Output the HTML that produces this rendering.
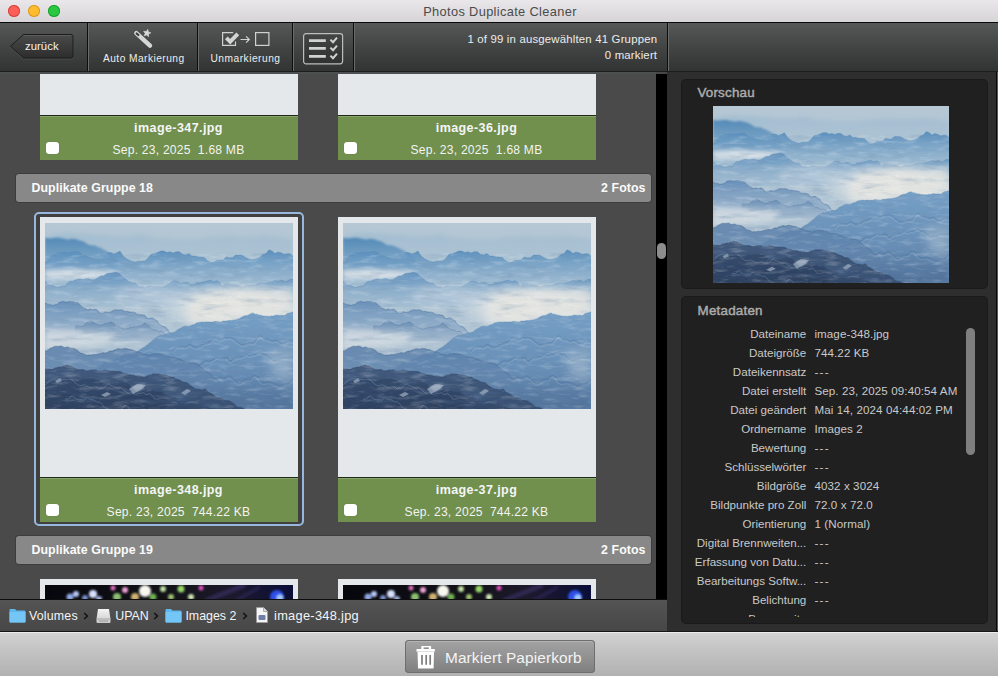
<!DOCTYPE html>
<html><head><meta charset="utf-8">
<style>
*{margin:0;padding:0;box-sizing:border-box}
html,body{width:998px;height:676px;overflow:hidden;background:#474747;font-family:"Liberation Sans",sans-serif}
.abs{position:absolute}
svg.img{position:absolute;display:block}
</style></head><body>
<svg width="0" height="0" style="position:absolute"><defs>
<radialGradient id="g_fog" cx="0.5" cy="0.5" r="0.5">
  <stop offset="0" stop-color="#e6e6e2"/>
  <stop offset="0.5" stop-color="#e3e6e5" stop-opacity="0.9"/>
  <stop offset="1" stop-color="#d5dfe6" stop-opacity="0"/>
</radialGradient>
<filter id="f05" x="-10%" y="-10%" width="120%" height="120%"><feGaussianBlur stdDeviation="0.5"/></filter>
<filter id="f1" x="-20%" y="-20%" width="140%" height="140%"><feGaussianBlur stdDeviation="1"/></filter>
<filter id="f2" x="-30%" y="-30%" width="160%" height="160%"><feGaussianBlur stdDeviation="2.5"/></filter>
<filter id="f4" x="-40%" y="-40%" width="180%" height="180%"><feGaussianBlur stdDeviation="5"/></filter>
<filter id="tex" x="0" y="0" width="100%" height="100%">
  <feTurbulence type="fractalNoise" baseFrequency="0.06 0.22" numOctaves="4" seed="11" result="n"/>
  <feColorMatrix in="n" type="matrix" values="0 0 0 0 1  0 0 0 0 1  0 0 0 0 1  2.6 0 0 0 -1.3" result="w"/>
  <feComposite in="w" in2="SourceGraphic" operator="in"/>
</filter>
<filter id="texd" x="0" y="0" width="100%" height="100%">
  <feTurbulence type="fractalNoise" baseFrequency="0.04 0.16" numOctaves="4" seed="5" result="n"/>
  <feColorMatrix in="n" type="matrix" values="0 0 0 0 0.15  0 0 0 0 0.26  0 0 0 0 0.42  -2.6 0 0 0 1.25" result="d"/>
  <feComposite in="d" in2="SourceGraphic" operator="in"/>
</filter>
<linearGradient id="mg1" x1="0" y1="0" x2="0" y2="1"><stop offset="0" stop-color="#b7c8d4" stop-opacity="1"/><stop offset="0.25" stop-color="#a9c1d3" stop-opacity="1"/><stop offset="0.6" stop-color="#b3c6d4" stop-opacity="1"/><stop offset="1" stop-color="#9db4c9" stop-opacity="1"/></linearGradient><linearGradient id="mg2" x1="0" y1="0" x2="0" y2="1"><stop offset="0" stop-color="#93b4ce" stop-opacity="0.6"/><stop offset="1" stop-color="#a9c1d3" stop-opacity="0.1"/></linearGradient><linearGradient id="mg3" x1="0" y1="0" x2="0" y2="1"><stop offset="0" stop-color="#4f87b6" stop-opacity="0.95"/><stop offset="1" stop-color="#6f9dc4" stop-opacity="0.6"/></linearGradient><linearGradient id="mg4" x1="0" y1="0" x2="0" y2="1"><stop offset="0" stop-color="#5a8fbd" stop-opacity="1"/><stop offset="1" stop-color="#8fb1cd" stop-opacity="0.5"/></linearGradient><linearGradient id="mg5" x1="0" y1="0" x2="0" y2="1"><stop offset="0" stop-color="#5f90bd" stop-opacity="0.9"/><stop offset="1" stop-color="#8fb0cc" stop-opacity="0.35"/></linearGradient><linearGradient id="mg6" x1="0" y1="0" x2="0" y2="1"><stop offset="0" stop-color="#668eb8" stop-opacity="0.95"/><stop offset="1" stop-color="#93aecb" stop-opacity="0.5"/></linearGradient><linearGradient id="mg7" x1="0" y1="0" x2="0" y2="1"><stop offset="0" stop-color="#5f86b0" stop-opacity="0.8"/><stop offset="1" stop-color="#b9c8d5" stop-opacity="0.2"/></linearGradient><linearGradient id="mg8" x1="0" y1="0" x2="0" y2="1"><stop offset="0" stop-color="#76a0c6" stop-opacity="1"/><stop offset="1" stop-color="#5e82ab" stop-opacity="1"/></linearGradient><linearGradient id="mg9" x1="0" y1="0" x2="0" y2="1"><stop offset="0" stop-color="#5b80aa" stop-opacity="0.85"/><stop offset="1" stop-color="#6a8cb3" stop-opacity="0.8"/></linearGradient><linearGradient id="mg10" x1="0" y1="0" x2="0" y2="1"><stop offset="0" stop-color="#425b7e" stop-opacity="1"/><stop offset="1" stop-color="#364c6d" stop-opacity="1"/></linearGradient><linearGradient id="mg11" x1="0" y1="0" x2="0" y2="1"><stop offset="0" stop-color="#33486a" stop-opacity="0.8"/><stop offset="1" stop-color="#2c3f5e" stop-opacity="0.9"/></linearGradient><linearGradient id="mg12" x1="0" y1="0" x2="0" y2="1"><stop offset="0" stop-color="#3f5a80" stop-opacity="0"/><stop offset="1" stop-color="#3f5a80" stop-opacity="0.45"/></linearGradient><symbol id="mtn" viewBox="0 0 248 186" preserveAspectRatio="none">
<rect width="248" height="186" fill="url(#mg1)"/>
<path d="M0.0 14.0 L3.8 13.0 L7.5 11.9 L11.2 11.1 L15.0 11.0 L18.8 10.6 L22.5 10.3 L26.2 10.3 L30.0 11.1 L33.8 11.3 L37.5 10.6 L41.2 11.2 L45.0 11.2 L48.8 11.8 L52.5 12.4 L56.2 12.0 L60.0 12.0 L64.4 13.1 L68.8 13.4 L73.1 13.4 L77.5 13.3 L81.9 13.5 L86.2 12.9 L90.6 12.4 L95.0 11.2 L99.4 12.5 L103.8 13.9 L108.1 14.5 L112.5 15.4 L116.9 15.5 L121.2 15.5 L125.6 16.2 L130.0 17.0 L134.4 16.4 L138.8 16.6 L143.1 16.5 L147.5 16.9 L151.9 16.8 L156.2 16.0 L160.6 14.9 L165.0 14.6 L169.4 14.0 L173.8 14.4 L178.1 13.9 L182.5 13.1 L186.9 13.5 L191.2 14.3 L195.6 14.2 L200.0 14.0 L203.0 14.2 L206.0 14.5 L209.0 14.1 L212.0 13.9 L215.0 13.8 L218.0 13.1 L221.0 13.1 L224.0 13.5 L227.0 13.8 L230.0 14.2 L233.0 14.2 L236.0 14.6 L239.0 15.4 L242.0 16.1 L245.0 16.4 L248.0 17.0 L248.0 38 L0.0 38 Z" fill="url(#mg2)" filter="url(#f2)"/>
<path d="M0.0 15.0 L1.9 15.0 L3.8 15.2 L5.6 15.4 L7.5 15.0 L9.4 15.0 L11.2 14.6 L13.1 14.7 L15.0 14.8 L16.9 15.4 L18.8 15.4 L20.6 16.0 L22.5 16.4 L24.4 16.3 L26.2 15.8 L28.1 15.8 L30.0 16.0 L31.6 16.3 L33.2 16.9 L34.9 17.4 L36.5 17.9 L38.1 18.3 L39.8 19.2 L41.4 20.3 L43.0 21.6 L44.6 22.1 L46.2 22.2 L47.9 22.2 L49.5 22.4 L51.1 22.9 L52.8 24.1 L54.4 24.3 L56.0 25.0 L57.0 25.6 L58.0 26.4 L59.0 26.8 L60.0 27.1 L61.0 27.8 L62.0 28.7 L63.0 29.2 L64.0 29.9 L65.0 30.8 L66.0 32.1 L67.0 32.9 L68.0 33.4 L69.0 33.8 L70.0 34.3 L71.0 35.0 L72.0 36.0 L72.0 46 L0.0 46 Z" fill="url(#mg3)" filter="url(#f1)"/>
<path d="M0.0 40.0 L3.1 38.0 L6.2 33.1 L9.4 31.8 L12.5 29.6 L15.6 30.0 L18.8 28.9 L21.9 29.7 L25.0 29.2 L28.1 28.8 L31.2 28.4 L34.4 29.2 L37.5 32.5 L40.6 32.4 L43.8 33.8 L46.9 35.9 L50.0 36.0 L53.1 34.9 L56.2 31.3 L59.4 31.5 L62.5 29.4 L65.6 29.6 L68.8 30.7 L71.9 29.8 L75.0 28.1 L78.1 32.9 L81.2 35.4 L84.4 37.3 L87.5 38.4 L90.6 39.1 L93.8 38.2 L96.9 38.2 L100.0 38.0 L103.1 35.0 L106.2 30.9 L109.4 30.6 L112.5 29.4 L115.6 28.0 L118.8 27.9 L121.9 29.4 L125.0 28.8 L128.1 29.9 L131.2 28.7 L134.4 28.8 L137.5 31.2 L140.6 32.1 L143.8 30.6 L146.9 33.1 L150.0 33.0 L153.1 33.9 L156.2 34.0 L159.4 34.5 L162.5 37.8 L165.6 39.6 L168.8 39.3 L171.9 37.2 L175.0 37.0 L178.1 36.8 L181.2 34.0 L184.4 34.7 L187.5 34.6 L190.6 32.1 L193.8 32.1 L196.9 32.2 L200.0 34.0 L203.0 35.7 L206.0 36.7 L209.0 36.2 L212.0 35.3 L215.0 34.0 L218.0 31.4 L221.0 30.4 L224.0 26.8 L227.0 27.9 L230.0 30.6 L233.0 28.9 L236.0 29.7 L239.0 31.3 L242.0 30.8 L245.0 30.7 L248.0 33.0 L248.0 62 L0.0 62 Z" fill="url(#mg4)" filter="url(#f05)"/>
<path d="M0.0 40.0 L3.1 38.0 L6.2 33.1 L9.4 31.8 L12.5 29.6 L15.6 30.0 L18.8 28.9 L21.9 29.7 L25.0 29.2 L28.1 28.8 L31.2 28.4 L34.4 29.2 L37.5 32.5 L40.6 32.4 L43.8 33.8 L46.9 35.9 L50.0 36.0 L53.1 34.9 L56.2 31.3 L59.4 31.5 L62.5 29.4 L65.6 29.6 L68.8 30.7 L71.9 29.8 L75.0 28.1 L78.1 32.9 L81.2 35.4 L84.4 37.3 L87.5 38.4 L90.6 39.1 L93.8 38.2 L96.9 38.2 L100.0 38.0 L103.1 35.0 L106.2 30.9 L109.4 30.6 L112.5 29.4 L115.6 28.0 L118.8 27.9 L121.9 29.4 L125.0 28.8 L128.1 29.9 L131.2 28.7 L134.4 28.8 L137.5 31.2 L140.6 32.1 L143.8 30.6 L146.9 33.1 L150.0 33.0 L153.1 33.9 L156.2 34.0 L159.4 34.5 L162.5 37.8 L165.6 39.6 L168.8 39.3 L171.9 37.2 L175.0 37.0 L178.1 36.8 L181.2 34.0 L184.4 34.7 L187.5 34.6 L190.6 32.1 L193.8 32.1 L196.9 32.2 L200.0 34.0 L203.0 35.7 L206.0 36.7 L209.0 36.2 L212.0 35.3 L215.0 34.0 L218.0 31.4 L221.0 30.4 L224.0 26.8 L227.0 27.9 L230.0 30.6 L233.0 28.9 L236.0 29.7 L239.0 31.3 L242.0 30.8 L245.0 30.7 L248.0 33.0" fill="none" stroke="#4f80ad" stroke-width="1" opacity="0.3" filter="url(#f05)"/>
<path d="M0 47 L32 46 L74 49 L62 55 L25 57 L0 56 Z" fill="#dde3e8" opacity="0.85" filter="url(#f2)"/>
<path d="M0.0 58.0 L2.5 61.0 L5.0 62.5 L7.5 62.2 L10.0 63.6 L12.5 64.5 L15.0 63.8 L17.5 62.8 L20.0 63.0 L22.5 60.1 L25.0 58.3 L27.5 58.3 L30.0 57.0 L32.5 56.3 L35.0 55.9 L37.5 56.6 L40.0 56.0 L43.1 55.6 L46.2 56.8 L49.4 56.8 L52.5 54.9 L55.6 53.0 L58.8 52.7 L61.9 50.6 L65.0 50.3 L68.1 49.8 L71.2 49.3 L74.4 50.8 L77.5 53.3 L80.6 56.1 L83.8 58.6 L86.9 60.3 L90.0 60.0 L92.5 62.6 L95.0 64.1 L97.5 63.6 L100.0 65.2 L102.5 63.6 L105.0 62.9 L107.5 63.5 L110.0 64.0 L112.5 63.8 L115.0 63.8 L117.5 64.0 L120.0 63.3 L122.5 61.6 L125.0 60.1 L127.5 58.1 L130.0 58.0 L132.2 58.4 L134.4 59.8 L136.6 60.3 L138.8 59.5 L140.9 59.4 L143.1 59.8 L145.3 61.1 L147.5 61.5 L149.7 61.4 L151.9 59.5 L154.1 59.7 L156.2 59.4 L158.4 59.1 L160.6 58.2 L162.8 57.8 L165.0 57.0 L166.6 57.5 L168.1 58.4 L169.7 58.5 L171.2 57.5 L172.8 58.2 L174.4 59.1 L175.9 62.1 L177.5 63.4 L179.1 61.7 L180.6 60.8 L182.2 61.0 L183.8 60.3 L185.3 61.3 L186.9 61.5 L188.4 61.9 L190.0 62.0 L193.6 63.0 L197.2 64.3 L200.9 62.2 L204.5 62.2 L208.1 62.5 L211.8 61.3 L215.4 60.3 L219.0 60.2 L222.6 59.9 L226.2 58.7 L229.9 57.3 L233.5 58.0 L237.1 57.3 L240.8 59.1 L244.4 56.4 L248.0 56.0 L248.0 84 L0.0 84 Z" fill="url(#mg5)" filter="url(#f05)"/>
<path d="M0.0 58.0 L2.5 61.0 L5.0 62.5 L7.5 62.2 L10.0 63.6 L12.5 64.5 L15.0 63.8 L17.5 62.8 L20.0 63.0 L22.5 60.1 L25.0 58.3 L27.5 58.3 L30.0 57.0 L32.5 56.3 L35.0 55.9 L37.5 56.6 L40.0 56.0 L43.1 55.6 L46.2 56.8 L49.4 56.8 L52.5 54.9 L55.6 53.0 L58.8 52.7 L61.9 50.6 L65.0 50.3 L68.1 49.8 L71.2 49.3 L74.4 50.8 L77.5 53.3 L80.6 56.1 L83.8 58.6 L86.9 60.3 L90.0 60.0 L92.5 62.6 L95.0 64.1 L97.5 63.6 L100.0 65.2 L102.5 63.6 L105.0 62.9 L107.5 63.5 L110.0 64.0 L112.5 63.8 L115.0 63.8 L117.5 64.0 L120.0 63.3 L122.5 61.6 L125.0 60.1 L127.5 58.1 L130.0 58.0 L132.2 58.4 L134.4 59.8 L136.6 60.3 L138.8 59.5 L140.9 59.4 L143.1 59.8 L145.3 61.1 L147.5 61.5 L149.7 61.4 L151.9 59.5 L154.1 59.7 L156.2 59.4 L158.4 59.1 L160.6 58.2 L162.8 57.8 L165.0 57.0 L166.6 57.5 L168.1 58.4 L169.7 58.5 L171.2 57.5 L172.8 58.2 L174.4 59.1 L175.9 62.1 L177.5 63.4 L179.1 61.7 L180.6 60.8 L182.2 61.0 L183.8 60.3 L185.3 61.3 L186.9 61.5 L188.4 61.9 L190.0 62.0 L193.6 63.0 L197.2 64.3 L200.9 62.2 L204.5 62.2 L208.1 62.5 L211.8 61.3 L215.4 60.3 L219.0 60.2 L222.6 59.9 L226.2 58.7 L229.9 57.3 L233.5 58.0 L237.1 57.3 L240.8 59.1 L244.4 56.4 L248.0 56.0" fill="none" stroke="#4f7faa" stroke-width="1" opacity="0.3" filter="url(#f05)"/>
<ellipse cx="190" cy="84" rx="80" ry="26" fill="url(#g_fog)"/>
<path d="M150 72 L200 68 L248 66 L248 96 L205 94 L165 102 L140 98 Z" fill="#e2e3e0" opacity="0.85" filter="url(#f4)"/>
<ellipse cx="105" cy="72" rx="36" ry="10" fill="#d3dde6" opacity="0.45" filter="url(#f4)"/>
<path d="M0.0 80.0 L1.2 80.4 L2.5 81.2 L3.8 81.4 L5.0 81.3 L6.2 82.2 L7.5 82.1 L8.8 82.3 L10.0 81.7 L11.2 81.4 L12.5 81.2 L13.8 79.9 L15.0 78.8 L16.2 78.9 L17.5 78.3 L18.8 78.5 L20.0 79.0 L21.6 78.9 L23.1 79.1 L24.7 78.4 L26.2 78.8 L27.8 78.6 L29.4 79.1 L30.9 79.4 L32.5 79.5 L34.1 81.3 L35.6 82.4 L37.2 83.9 L38.8 85.0 L40.3 85.5 L41.9 86.5 L43.4 86.8 L45.0 86.0 L46.6 86.6 L48.1 86.9 L49.7 86.3 L51.2 86.5 L52.8 87.4 L54.4 89.5 L55.9 90.4 L57.5 90.1 L59.1 90.1 L60.6 88.8 L62.2 89.5 L63.8 89.3 L65.3 89.0 L66.9 88.5 L68.4 87.5 L70.0 87.0 L71.6 86.7 L73.1 87.3 L74.7 86.8 L76.2 86.9 L77.8 87.2 L79.4 88.2 L80.9 88.7 L82.5 88.3 L84.1 89.1 L85.6 89.0 L87.2 89.4 L88.8 89.2 L90.3 89.8 L91.9 91.4 L93.4 91.4 L95.0 92.0 L96.1 91.7 L97.1 91.8 L98.2 92.3 L99.2 92.2 L100.3 93.0 L101.4 94.7 L102.4 95.3 L103.5 95.5 L104.6 95.5 L105.6 95.2 L106.7 95.2 L107.8 95.2 L108.8 96.4 L109.9 96.8 L110.9 97.2 L112.0 98.0 L113.0 99.6 L114.0 101.1 L115.0 101.5 L116.0 102.5 L117.0 102.7 L118.0 103.5 L119.0 103.3 L120.0 103.9 L121.0 104.8 L122.0 106.1 L123.0 107.2 L124.0 109.3 L125.0 109.4 L126.0 110.2 L127.0 111.6 L128.0 112.0 L128.0 118 L0.0 118 Z" fill="url(#mg6)" filter="url(#f05)"/>
<path d="M0.0 80.0 L1.2 80.4 L2.5 81.2 L3.8 81.4 L5.0 81.3 L6.2 82.2 L7.5 82.1 L8.8 82.3 L10.0 81.7 L11.2 81.4 L12.5 81.2 L13.8 79.9 L15.0 78.8 L16.2 78.9 L17.5 78.3 L18.8 78.5 L20.0 79.0 L21.6 78.9 L23.1 79.1 L24.7 78.4 L26.2 78.8 L27.8 78.6 L29.4 79.1 L30.9 79.4 L32.5 79.5 L34.1 81.3 L35.6 82.4 L37.2 83.9 L38.8 85.0 L40.3 85.5 L41.9 86.5 L43.4 86.8 L45.0 86.0 L46.6 86.6 L48.1 86.9 L49.7 86.3 L51.2 86.5 L52.8 87.4 L54.4 89.5 L55.9 90.4 L57.5 90.1 L59.1 90.1 L60.6 88.8 L62.2 89.5 L63.8 89.3 L65.3 89.0 L66.9 88.5 L68.4 87.5 L70.0 87.0 L71.6 86.7 L73.1 87.3 L74.7 86.8 L76.2 86.9 L77.8 87.2 L79.4 88.2 L80.9 88.7 L82.5 88.3 L84.1 89.1 L85.6 89.0 L87.2 89.4 L88.8 89.2 L90.3 89.8 L91.9 91.4 L93.4 91.4 L95.0 92.0 L96.1 91.7 L97.1 91.8 L98.2 92.3 L99.2 92.2 L100.3 93.0 L101.4 94.7 L102.4 95.3 L103.5 95.5 L104.6 95.5 L105.6 95.2 L106.7 95.2 L107.8 95.2 L108.8 96.4 L109.9 96.8 L110.9 97.2 L112.0 98.0 L113.0 99.6 L114.0 101.1 L115.0 101.5 L116.0 102.5 L117.0 102.7 L118.0 103.5 L119.0 103.3 L120.0 103.9 L121.0 104.8 L122.0 106.1 L123.0 107.2 L124.0 109.3 L125.0 109.4 L126.0 110.2 L127.0 111.6 L128.0 112.0" fill="none" stroke="#466f9a" stroke-width="1.2" opacity="0.4" filter="url(#f05)"/>
<path d="M30.0 104.0 L32.2 102.7 L34.5 103.2 L36.8 103.6 L39.0 102.4 L41.2 99.9 L43.5 99.1 L45.8 98.1 L48.0 98.4 L50.2 100.7 L52.5 101.5 L54.8 102.3 L57.0 102.0 L59.2 100.7 L61.5 100.4 L63.8 99.8 L66.0 99.0 L67.4 99.6 L68.8 100.2 L70.1 102.4 L71.5 103.9 L72.9 103.5 L74.2 103.7 L75.6 104.8 L77.0 105.0 L78.4 106.1 L79.8 106.1 L81.1 106.0 L82.5 105.5 L83.9 105.3 L85.2 104.2 L86.6 104.6 L88.0 104.0 L88.8 103.8 L89.5 103.7 L90.2 103.9 L91.0 103.7 L91.8 103.8 L92.5 103.6 L93.2 103.3 L94.0 103.0 L94.8 102.8 L95.5 103.0 L96.2 102.6 L97.0 102.0 L97.8 101.7 L98.5 100.8 L99.2 100.3 L100.0 100.0 L101.6 101.5 L103.2 102.5 L104.9 104.8 L106.5 105.7 L108.1 106.5 L109.8 107.0 L111.4 107.1 L113.0 108.6 L114.6 108.7 L116.2 108.3 L117.9 109.1 L119.5 110.6 L121.1 112.0 L122.8 112.3 L124.4 112.4 L126.0 112.0 L126.0 122 L30.0 122 Z" fill="url(#mg7)" filter="url(#f05)"/>
<path d="M30.0 104.0 L32.2 102.7 L34.5 103.2 L36.8 103.6 L39.0 102.4 L41.2 99.9 L43.5 99.1 L45.8 98.1 L48.0 98.4 L50.2 100.7 L52.5 101.5 L54.8 102.3 L57.0 102.0 L59.2 100.7 L61.5 100.4 L63.8 99.8 L66.0 99.0 L67.4 99.6 L68.8 100.2 L70.1 102.4 L71.5 103.9 L72.9 103.5 L74.2 103.7 L75.6 104.8 L77.0 105.0 L78.4 106.1 L79.8 106.1 L81.1 106.0 L82.5 105.5 L83.9 105.3 L85.2 104.2 L86.6 104.6 L88.0 104.0 L88.8 103.8 L89.5 103.7 L90.2 103.9 L91.0 103.7 L91.8 103.8 L92.5 103.6 L93.2 103.3 L94.0 103.0 L94.8 102.8 L95.5 103.0 L96.2 102.6 L97.0 102.0 L97.8 101.7 L98.5 100.8 L99.2 100.3 L100.0 100.0 L101.6 101.5 L103.2 102.5 L104.9 104.8 L106.5 105.7 L108.1 106.5 L109.8 107.0 L111.4 107.1 L113.0 108.6 L114.6 108.7 L116.2 108.3 L117.9 109.1 L119.5 110.6 L121.1 112.0 L122.8 112.3 L124.4 112.4 L126.0 112.0" fill="none" stroke="#47699a" stroke-width="1" opacity="0.35" filter="url(#f05)"/>
<path d="M0 106 L30 107 L72 112 L62 121 L22 125 L0 125 Z" fill="#d3dbe2" opacity="0.8" filter="url(#f2)"/>
<path d="M40.0 150.0 L42.5 149.1 L45.0 147.3 L47.5 146.6 L50.0 146.4 L52.5 145.2 L55.0 143.5 L57.5 141.8 L60.0 139.3 L62.5 139.2 L65.0 138.7 L67.5 137.4 L70.0 136.3 L72.5 135.1 L75.0 134.6 L77.5 132.8 L80.0 132.0 L82.0 131.4 L84.0 130.2 L86.0 130.3 L88.0 129.6 L90.0 128.9 L92.0 128.6 L94.0 127.5 L96.0 125.9 L98.0 124.8 L100.0 123.8 L102.0 122.2 L104.0 120.4 L106.0 119.1 L108.0 117.2 L110.0 115.4 L112.0 114.0 L113.4 113.4 L114.8 112.6 L116.1 112.3 L117.5 112.4 L118.9 112.1 L120.2 111.9 L121.6 110.9 L123.0 110.6 L124.4 110.2 L125.8 110.2 L127.1 109.7 L128.5 109.5 L129.9 108.9 L131.2 107.9 L132.6 106.7 L134.0 106.0 L135.9 105.1 L137.9 103.8 L139.8 103.2 L141.8 103.3 L143.7 103.4 L145.6 102.7 L147.6 101.8 L149.5 101.5 L151.4 100.1 L153.4 99.4 L155.3 99.0 L157.2 98.9 L159.2 99.3 L161.1 98.9 L163.1 99.1 L165.0 99.0 L167.7 99.1 L170.4 98.3 L173.1 98.7 L175.8 99.1 L178.4 98.1 L181.1 98.0 L183.8 97.5 L186.5 97.4 L189.2 96.9 L191.9 96.5 L194.6 95.7 L197.2 93.7 L199.9 92.7 L202.6 92.4 L205.3 90.9 L208.0 90.0 L209.2 90.8 L210.5 91.2 L211.8 91.2 L213.0 91.6 L214.2 92.1 L215.5 92.2 L216.8 92.5 L218.0 93.1 L219.2 93.1 L220.5 93.0 L221.8 93.2 L223.0 93.2 L224.2 93.4 L225.5 93.2 L226.8 92.9 L228.0 93.0 L229.2 92.8 L230.5 92.2 L231.8 92.1 L233.0 92.3 L234.2 92.4 L235.5 92.4 L236.8 92.2 L238.0 92.6 L239.2 92.4 L240.5 91.9 L241.8 90.8 L243.0 90.2 L244.2 89.9 L245.5 89.8 L246.8 89.2 L248.0 89.0 L248.0 186 L40.0 186 Z" fill="url(#mg8)" filter="url(#f05)"/>
<path d="M40.0 150.0 L42.5 149.1 L45.0 147.3 L47.5 146.6 L50.0 146.4 L52.5 145.2 L55.0 143.5 L57.5 141.8 L60.0 139.3 L62.5 139.2 L65.0 138.7 L67.5 137.4 L70.0 136.3 L72.5 135.1 L75.0 134.6 L77.5 132.8 L80.0 132.0 L82.0 131.4 L84.0 130.2 L86.0 130.3 L88.0 129.6 L90.0 128.9 L92.0 128.6 L94.0 127.5 L96.0 125.9 L98.0 124.8 L100.0 123.8 L102.0 122.2 L104.0 120.4 L106.0 119.1 L108.0 117.2 L110.0 115.4 L112.0 114.0 L113.4 113.4 L114.8 112.6 L116.1 112.3 L117.5 112.4 L118.9 112.1 L120.2 111.9 L121.6 110.9 L123.0 110.6 L124.4 110.2 L125.8 110.2 L127.1 109.7 L128.5 109.5 L129.9 108.9 L131.2 107.9 L132.6 106.7 L134.0 106.0 L135.9 105.1 L137.9 103.8 L139.8 103.2 L141.8 103.3 L143.7 103.4 L145.6 102.7 L147.6 101.8 L149.5 101.5 L151.4 100.1 L153.4 99.4 L155.3 99.0 L157.2 98.9 L159.2 99.3 L161.1 98.9 L163.1 99.1 L165.0 99.0 L167.7 99.1 L170.4 98.3 L173.1 98.7 L175.8 99.1 L178.4 98.1 L181.1 98.0 L183.8 97.5 L186.5 97.4 L189.2 96.9 L191.9 96.5 L194.6 95.7 L197.2 93.7 L199.9 92.7 L202.6 92.4 L205.3 90.9 L208.0 90.0 L209.2 90.8 L210.5 91.2 L211.8 91.2 L213.0 91.6 L214.2 92.1 L215.5 92.2 L216.8 92.5 L218.0 93.1 L219.2 93.1 L220.5 93.0 L221.8 93.2 L223.0 93.2 L224.2 93.4 L225.5 93.2 L226.8 92.9 L228.0 93.0 L229.2 92.8 L230.5 92.2 L231.8 92.1 L233.0 92.3 L234.2 92.4 L235.5 92.4 L236.8 92.2 L238.0 92.6 L239.2 92.4 L240.5 91.9 L241.8 90.8 L243.0 90.2 L244.2 89.9 L245.5 89.8 L246.8 89.2 L248.0 89.0" fill="none" stroke="#5a86b0" stroke-width="1.2" opacity="0.3" filter="url(#f05)"/>
<path d="M128.0 128.0 L130.0 125.2 L132.0 124.1 L134.0 123.4 L136.0 123.7 L138.0 123.4 L140.0 124.0 L142.0 122.9 L144.0 121.5 L146.0 121.9 L148.0 123.6 L150.0 124.1 L152.0 124.2 L154.0 123.2 L156.0 122.8 L158.0 121.1 L160.0 120.0 L161.9 120.0 L163.8 119.2 L165.6 118.5 L167.5 115.9 L169.4 114.8 L171.2 114.7 L173.1 115.2 L175.0 116.2 L176.9 116.2 L178.8 114.5 L180.6 114.1 L182.5 114.7 L184.4 113.9 L186.2 114.6 L188.1 115.2 L190.0 117.0 L191.6 118.6 L193.1 119.1 L194.7 120.6 L196.2 121.3 L197.8 121.7 L199.4 121.0 L200.9 120.7 L202.5 120.4 L204.1 119.6 L205.6 120.1 L207.2 119.6 L208.8 119.6 L210.3 118.1 L211.9 115.7 L213.4 114.2 L215.0 113.0 L217.1 113.6 L219.1 115.7 L221.2 115.8 L223.2 116.4 L225.3 117.1 L227.4 118.0 L229.4 117.3 L231.5 117.1 L233.6 118.5 L235.6 120.1 L237.7 119.9 L239.8 121.0 L241.8 118.3 L243.9 117.7 L245.9 118.4 L248.0 118.0" fill="none" stroke="#48709c" stroke-width="1.3" opacity="0.3" filter="url(#f05)"/>
<path d="M128.0 130.2 L130.0 127.4 L132.0 126.3 L134.0 125.6 L136.0 125.9 L138.0 125.6 L140.0 126.2 L142.0 125.1 L144.0 123.7 L146.0 124.1 L148.0 125.8 L150.0 126.3 L152.0 126.4 L154.0 125.4 L156.0 125.0 L158.0 123.3 L160.0 122.2 L161.9 122.2 L163.8 121.4 L165.6 120.7 L167.5 118.1 L169.4 117.0 L171.2 116.9 L173.1 117.4 L175.0 118.4 L176.9 118.4 L178.8 116.7 L180.6 116.3 L182.5 116.9 L184.4 116.1 L186.2 116.8 L188.1 117.4 L190.0 119.2 L191.6 120.8 L193.1 121.3 L194.7 122.8 L196.2 123.5 L197.8 123.9 L199.4 123.2 L200.9 122.9 L202.5 122.6 L204.1 121.8 L205.6 122.3 L207.2 121.8 L208.8 121.8 L210.3 120.3 L211.9 117.9 L213.4 116.4 L215.0 115.2 L217.1 115.8 L219.1 117.9 L221.2 118.0 L223.2 118.6 L225.3 119.3 L227.4 120.2 L229.4 119.5 L231.5 119.3 L233.6 120.7 L235.6 122.3 L237.7 122.1 L239.8 123.2 L241.8 120.5 L243.9 119.9 L245.9 120.6 L248.0 120.2" fill="none" stroke="#c9d6e2" stroke-width="1.1" opacity="0.2" filter="url(#f05)"/>
<path d="M120.0 146.0 L122.5 147.4 L125.0 146.7 L127.5 147.6 L130.0 146.6 L132.5 146.4 L135.0 147.4 L137.5 146.4 L140.0 146.2 L142.5 145.1 L145.0 143.9 L147.5 145.0 L150.0 145.8 L152.5 143.3 L155.0 141.6 L157.5 140.8 L160.0 138.0 L162.2 137.6 L164.4 138.3 L166.6 137.2 L168.8 136.2 L170.9 134.3 L173.1 134.1 L175.3 135.1 L177.5 134.7 L179.7 134.8 L181.9 134.5 L184.1 137.5 L186.2 138.0 L188.4 135.5 L190.6 134.7 L192.8 134.7 L195.0 134.0 L197.2 133.3 L199.4 132.3 L201.6 131.4 L203.8 132.2 L205.9 132.2 L208.1 130.9 L210.3 131.2 L212.5 130.0 L214.7 129.2 L216.9 130.0 L219.1 131.5 L221.2 131.3 L223.4 134.1 L225.6 135.3 L227.8 136.9 L230.0 138.0 L231.1 137.4 L232.2 136.6 L233.4 136.4 L234.5 136.7 L235.6 135.4 L236.8 135.2 L237.9 134.7 L239.0 134.3 L240.1 134.9 L241.2 134.8 L242.4 134.4 L243.5 134.6 L244.6 134.4 L245.8 134.4 L246.9 134.0 L248.0 134.0" fill="none" stroke="#48709c" stroke-width="1.3" opacity="0.3" filter="url(#f05)"/>
<path d="M120.0 148.2 L122.5 149.6 L125.0 148.9 L127.5 149.8 L130.0 148.8 L132.5 148.6 L135.0 149.6 L137.5 148.6 L140.0 148.4 L142.5 147.3 L145.0 146.1 L147.5 147.2 L150.0 148.0 L152.5 145.5 L155.0 143.8 L157.5 143.0 L160.0 140.2 L162.2 139.8 L164.4 140.5 L166.6 139.4 L168.8 138.4 L170.9 136.5 L173.1 136.3 L175.3 137.3 L177.5 136.9 L179.7 137.0 L181.9 136.7 L184.1 139.7 L186.2 140.2 L188.4 137.7 L190.6 136.9 L192.8 136.9 L195.0 136.2 L197.2 135.5 L199.4 134.5 L201.6 133.6 L203.8 134.4 L205.9 134.4 L208.1 133.1 L210.3 133.4 L212.5 132.2 L214.7 131.4 L216.9 132.2 L219.1 133.7 L221.2 133.5 L223.4 136.3 L225.6 137.5 L227.8 139.1 L230.0 140.2 L231.1 139.6 L232.2 138.8 L233.4 138.6 L234.5 138.9 L235.6 137.6 L236.8 137.4 L237.9 136.9 L239.0 136.5 L240.1 137.1 L241.2 137.0 L242.4 136.6 L243.5 136.8 L244.6 136.6 L245.8 136.6 L246.9 136.2 L248.0 136.2" fill="none" stroke="#c9d6e2" stroke-width="1.1" opacity="0.2" filter="url(#f05)"/>
<path d="M140.0 162.0 L142.2 161.8 L144.4 159.2 L146.6 158.6 L148.8 159.9 L150.9 159.1 L153.1 160.2 L155.3 160.2 L157.5 161.0 L159.7 159.1 L161.9 157.1 L164.1 156.8 L166.2 156.8 L168.4 155.1 L170.6 155.1 L172.8 154.8 L175.0 154.0 L177.2 154.9 L179.4 155.1 L181.6 154.3 L183.8 153.0 L185.9 154.3 L188.1 155.5 L190.3 157.9 L192.5 160.1 L194.7 160.2 L196.9 159.6 L199.1 156.9 L201.2 156.3 L203.4 156.1 L205.6 156.1 L207.8 153.1 L210.0 152.0 L212.4 153.5 L214.8 157.4 L217.1 159.1 L219.5 159.5 L221.9 158.8 L224.2 158.8 L226.6 159.3 L229.0 160.5 L231.4 161.1 L233.8 162.6 L236.1 162.1 L238.5 161.2 L240.9 160.1 L243.2 160.6 L245.6 158.7 L248.0 156.0" fill="none" stroke="#48709c" stroke-width="1.3" opacity="0.3" filter="url(#f05)"/>
<path d="M140.0 164.2 L142.2 164.0 L144.4 161.4 L146.6 160.8 L148.8 162.1 L150.9 161.3 L153.1 162.4 L155.3 162.4 L157.5 163.2 L159.7 161.3 L161.9 159.3 L164.1 159.0 L166.2 159.0 L168.4 157.3 L170.6 157.3 L172.8 157.0 L175.0 156.2 L177.2 157.1 L179.4 157.3 L181.6 156.5 L183.8 155.2 L185.9 156.5 L188.1 157.7 L190.3 160.1 L192.5 162.3 L194.7 162.4 L196.9 161.8 L199.1 159.1 L201.2 158.5 L203.4 158.3 L205.6 158.3 L207.8 155.3 L210.0 154.2 L212.4 155.7 L214.8 159.6 L217.1 161.3 L219.5 161.7 L221.9 161.0 L224.2 161.0 L226.6 161.5 L229.0 162.7 L231.4 163.3 L233.8 164.8 L236.1 164.3 L238.5 163.4 L240.9 162.3 L243.2 162.8 L245.6 160.9 L248.0 158.2" fill="none" stroke="#c9d6e2" stroke-width="1.1" opacity="0.2" filter="url(#f05)"/>
<path d="M220 128 L248 124 L248 162 L230 156 Z" fill="#b0c2d3" opacity="0.5" filter="url(#f4)"/>
<path d="M0.0 128.0 L1.9 127.8 L3.8 126.5 L5.6 125.0 L7.5 124.6 L9.4 123.3 L11.2 123.2 L13.1 123.6 L15.0 123.1 L16.9 123.2 L18.8 124.6 L20.6 124.4 L22.5 123.9 L24.4 124.7 L26.2 125.4 L28.1 125.4 L30.0 126.0 L31.9 127.0 L33.8 128.7 L35.6 130.1 L37.5 130.3 L39.4 131.2 L41.2 132.3 L43.1 131.9 L45.0 132.1 L46.9 131.8 L48.8 131.5 L50.6 131.6 L52.5 131.2 L54.4 130.5 L56.2 130.2 L58.1 129.6 L60.0 130.0 L61.9 129.7 L63.8 128.6 L65.6 127.9 L67.5 128.1 L69.4 126.8 L71.2 126.6 L73.1 125.7 L75.0 125.9 L76.9 126.2 L78.8 125.4 L80.6 125.5 L82.5 125.8 L84.4 126.4 L86.2 126.5 L88.1 127.3 L90.0 128.0 L91.9 128.9 L93.8 128.7 L95.6 129.5 L97.5 130.8 L99.4 131.0 L101.2 131.6 L103.1 132.2 L105.0 132.4 L106.9 131.2 L108.8 131.1 L110.6 130.8 L112.5 130.7 L114.4 131.2 L116.2 131.1 L118.1 131.6 L120.0 132.0 L121.9 132.7 L123.8 133.4 L125.6 134.3 L127.5 134.1 L129.4 134.4 L131.2 134.8 L133.1 135.9 L135.0 136.4 L136.9 137.3 L138.8 138.5 L140.6 138.3 L142.5 138.9 L144.4 139.4 L146.2 140.1 L148.1 139.7 L150.0 140.0 L151.6 140.5 L153.1 142.0 L154.7 143.2 L156.2 144.8 L157.8 145.9 L159.4 147.8 L160.9 148.5 L162.5 149.3 L164.1 150.6 L165.6 151.3 L167.2 153.6 L168.8 155.0 L170.3 156.2 L171.9 156.6 L173.4 158.0 L175.0 160.0 L175.0 186 L0.0 186 Z" fill="url(#mg9)" filter="url(#f05)"/>
<path d="M0.0 128.0 L1.9 127.8 L3.8 126.5 L5.6 125.0 L7.5 124.6 L9.4 123.3 L11.2 123.2 L13.1 123.6 L15.0 123.1 L16.9 123.2 L18.8 124.6 L20.6 124.4 L22.5 123.9 L24.4 124.7 L26.2 125.4 L28.1 125.4 L30.0 126.0 L31.9 127.0 L33.8 128.7 L35.6 130.1 L37.5 130.3 L39.4 131.2 L41.2 132.3 L43.1 131.9 L45.0 132.1 L46.9 131.8 L48.8 131.5 L50.6 131.6 L52.5 131.2 L54.4 130.5 L56.2 130.2 L58.1 129.6 L60.0 130.0 L61.9 129.7 L63.8 128.6 L65.6 127.9 L67.5 128.1 L69.4 126.8 L71.2 126.6 L73.1 125.7 L75.0 125.9 L76.9 126.2 L78.8 125.4 L80.6 125.5 L82.5 125.8 L84.4 126.4 L86.2 126.5 L88.1 127.3 L90.0 128.0 L91.9 128.9 L93.8 128.7 L95.6 129.5 L97.5 130.8 L99.4 131.0 L101.2 131.6 L103.1 132.2 L105.0 132.4 L106.9 131.2 L108.8 131.1 L110.6 130.8 L112.5 130.7 L114.4 131.2 L116.2 131.1 L118.1 131.6 L120.0 132.0 L121.9 132.7 L123.8 133.4 L125.6 134.3 L127.5 134.1 L129.4 134.4 L131.2 134.8 L133.1 135.9 L135.0 136.4 L136.9 137.3 L138.8 138.5 L140.6 138.3 L142.5 138.9 L144.4 139.4 L146.2 140.1 L148.1 139.7 L150.0 140.0 L151.6 140.5 L153.1 142.0 L154.7 143.2 L156.2 144.8 L157.8 145.9 L159.4 147.8 L160.9 148.5 L162.5 149.3 L164.1 150.6 L165.6 151.3 L167.2 153.6 L168.8 155.0 L170.3 156.2 L171.9 156.6 L173.4 158.0 L175.0 160.0" fill="none" stroke="#40628c" stroke-width="1.2" opacity="0.35" filter="url(#f05)"/>
<path d="M0.0 146.0 L1.4 146.2 L2.8 146.1 L4.1 146.1 L5.5 146.3 L6.9 146.3 L8.2 146.1 L9.6 145.3 L11.0 144.9 L12.4 144.7 L13.8 144.3 L15.1 143.9 L16.5 144.0 L17.9 143.1 L19.2 142.9 L20.6 142.8 L22.0 142.0 L23.5 142.8 L25.0 143.0 L26.5 143.4 L28.0 144.2 L29.5 144.7 L31.0 146.0 L32.5 146.6 L34.0 146.8 L35.5 146.9 L37.0 146.6 L38.5 146.8 L40.0 147.5 L41.5 147.9 L43.0 147.8 L44.5 147.6 L46.0 147.0 L47.9 147.0 L49.8 146.8 L51.6 147.4 L53.5 148.5 L55.4 148.0 L57.2 148.2 L59.1 147.3 L61.0 147.2 L62.9 147.7 L64.8 148.3 L66.6 148.6 L68.5 148.4 L70.4 148.6 L72.2 148.6 L74.1 148.6 L76.0 149.0 L77.9 150.2 L79.8 150.8 L81.6 150.9 L83.5 151.7 L85.4 152.1 L87.2 152.2 L89.1 152.5 L91.0 153.5 L92.9 152.9 L94.8 153.2 L96.6 153.5 L98.5 154.3 L100.4 153.9 L102.2 152.9 L104.1 152.2 L106.0 152.0 L107.9 151.2 L109.8 151.2 L111.6 151.2 L113.5 151.3 L115.4 151.5 L117.2 152.1 L119.1 152.1 L121.0 152.1 L122.9 152.8 L124.8 153.4 L126.6 154.1 L128.5 154.4 L130.4 155.9 L132.2 156.5 L134.1 157.1 L136.0 158.0 L137.5 158.9 L139.0 159.6 L140.5 159.4 L142.0 159.8 L143.5 161.0 L145.0 162.7 L146.5 163.3 L148.0 164.6 L149.5 165.5 L151.0 165.9 L152.5 166.0 L154.0 166.4 L155.5 166.8 L157.0 166.9 L158.5 166.7 L160.0 166.0 L161.6 167.5 L163.1 169.2 L164.7 169.7 L166.2 170.7 L167.8 171.7 L169.4 173.1 L170.9 173.8 L172.5 174.5 L174.1 174.9 L175.6 175.4 L177.2 175.8 L178.8 176.8 L180.3 177.4 L181.9 177.4 L183.4 177.8 L185.0 178.0 L185.9 178.9 L186.9 179.5 L187.8 180.1 L188.8 180.4 L189.7 181.6 L190.6 182.5 L191.6 183.4 L192.5 184.0 L193.4 184.3 L194.4 184.5 L195.3 184.4 L196.2 184.4 L197.2 185.1 L198.1 185.4 L199.1 185.9 L200.0 186.0 L200.0 186 L0.0 186 Z" fill="url(#mg10)" filter="url(#f05)"/>
<path d="M0.0 146.0 L1.4 146.2 L2.8 146.1 L4.1 146.1 L5.5 146.3 L6.9 146.3 L8.2 146.1 L9.6 145.3 L11.0 144.9 L12.4 144.7 L13.8 144.3 L15.1 143.9 L16.5 144.0 L17.9 143.1 L19.2 142.9 L20.6 142.8 L22.0 142.0 L23.5 142.8 L25.0 143.0 L26.5 143.4 L28.0 144.2 L29.5 144.7 L31.0 146.0 L32.5 146.6 L34.0 146.8 L35.5 146.9 L37.0 146.6 L38.5 146.8 L40.0 147.5 L41.5 147.9 L43.0 147.8 L44.5 147.6 L46.0 147.0 L47.9 147.0 L49.8 146.8 L51.6 147.4 L53.5 148.5 L55.4 148.0 L57.2 148.2 L59.1 147.3 L61.0 147.2 L62.9 147.7 L64.8 148.3 L66.6 148.6 L68.5 148.4 L70.4 148.6 L72.2 148.6 L74.1 148.6 L76.0 149.0 L77.9 150.2 L79.8 150.8 L81.6 150.9 L83.5 151.7 L85.4 152.1 L87.2 152.2 L89.1 152.5 L91.0 153.5 L92.9 152.9 L94.8 153.2 L96.6 153.5 L98.5 154.3 L100.4 153.9 L102.2 152.9 L104.1 152.2 L106.0 152.0 L107.9 151.2 L109.8 151.2 L111.6 151.2 L113.5 151.3 L115.4 151.5 L117.2 152.1 L119.1 152.1 L121.0 152.1 L122.9 152.8 L124.8 153.4 L126.6 154.1 L128.5 154.4 L130.4 155.9 L132.2 156.5 L134.1 157.1 L136.0 158.0 L137.5 158.9 L139.0 159.6 L140.5 159.4 L142.0 159.8 L143.5 161.0 L145.0 162.7 L146.5 163.3 L148.0 164.6 L149.5 165.5 L151.0 165.9 L152.5 166.0 L154.0 166.4 L155.5 166.8 L157.0 166.9 L158.5 166.7 L160.0 166.0 L161.6 167.5 L163.1 169.2 L164.7 169.7 L166.2 170.7 L167.8 171.7 L169.4 173.1 L170.9 173.8 L172.5 174.5 L174.1 174.9 L175.6 175.4 L177.2 175.8 L178.8 176.8 L180.3 177.4 L181.9 177.4 L183.4 177.8 L185.0 178.0 L185.9 178.9 L186.9 179.5 L187.8 180.1 L188.8 180.4 L189.7 181.6 L190.6 182.5 L191.6 183.4 L192.5 184.0 L193.4 184.3 L194.4 184.5 L195.3 184.4 L196.2 184.4 L197.2 185.1 L198.1 185.4 L199.1 185.9 L200.0 186.0" fill="none" stroke="#2d4262" stroke-width="1.2" opacity="0.5" filter="url(#f05)"/>
<path d="M0.0 160.0 L1.9 160.4 L3.8 160.5 L5.6 159.5 L7.5 159.2 L9.4 158.1 L11.2 155.2 L13.1 153.7 L15.0 153.8 L16.9 154.2 L18.8 155.0 L20.6 154.9 L22.5 154.6 L24.4 155.2 L26.2 157.2 L28.1 157.1 L30.0 157.0 L31.9 158.1 L33.8 158.0 L35.6 156.9 L37.5 156.2 L39.4 156.5 L41.2 156.1 L43.1 154.9 L45.0 154.7 L46.9 155.6 L48.8 155.1 L50.6 156.4 L52.5 156.2 L54.4 156.9 L56.2 158.8 L58.1 160.3 L60.0 161.0 L61.9 160.9 L63.8 161.4 L65.6 160.4 L67.5 160.8 L69.4 160.1 L71.2 160.3 L73.1 160.0 L75.0 159.0 L76.9 158.9 L78.8 158.8 L80.6 159.7 L82.5 160.5 L84.4 161.5 L86.2 164.1 L88.1 164.0 L90.0 165.0 L91.9 164.4 L93.8 164.2 L95.6 163.8 L97.5 163.2 L99.4 164.0 L101.2 163.9 L103.1 165.6 L105.0 167.5 L106.9 167.2 L108.8 167.4 L110.6 168.7 L112.5 168.6 L114.4 168.8 L116.2 168.5 L118.1 170.2 L120.0 171.0 L121.9 172.6 L123.8 173.2 L125.6 174.4 L127.5 175.7 L129.4 175.6 L131.2 176.2 L133.1 177.1 L135.0 179.5 L136.9 180.3 L138.8 180.6 L140.6 181.5 L142.5 181.6 L144.4 181.2 L146.2 179.6 L148.1 179.9 L150.0 179.0 L151.2 179.6 L152.5 180.1 L153.8 180.0 L155.0 180.0 L156.2 181.5 L157.5 182.0 L158.8 181.9 L160.0 182.7 L161.2 183.1 L162.5 183.7 L163.8 185.0 L165.0 186.2 L166.2 186.5 L167.5 186.7 L168.8 186.5 L170.0 186.0 L170.0 186 L0.0 186 Z" fill="url(#mg11)" filter="url(#f05)"/>
<rect x="120" y="150" width="128" height="36" fill="url(#mg12)" filter="url(#f2)"/>
<path d="M86 164 L96 161 L100 165 L92 169 Z" fill="#d5dde7" opacity="0.45" filter="url(#f1)"/>
<path d="M84.0 166.0 L92.0 161.0 L101.0 162.0 L97.0 166.0 L88.0 171.0 Z" fill="#cfd9e5" opacity="0.5" filter="url(#f05)"/>
<path d="M10.0 158.0 L15.0 155.0 L17.0 158.0 L12.0 160.0 Z" fill="#cfd9e5" opacity="0.5" filter="url(#f05)"/>
<path d="M56.0 172.0 L62.0 169.0 L66.0 171.0 L60.0 174.0 Z" fill="#cfd9e5" opacity="0.5" filter="url(#f05)"/>
<path d="M136.0 170.0 L142.0 166.0 L146.0 168.0 L140.0 172.0 Z" fill="#cfd9e5" opacity="0.5" filter="url(#f05)"/>
<path d="M0.0 162.0 L1.9 160.7 L3.8 158.1 L5.6 157.0 L7.5 156.3 L9.4 155.9 L11.2 155.9 L13.1 155.6 L15.0 155.9 L16.9 156.1 L18.8 156.9 L20.6 156.9 L22.5 156.5 L24.4 156.2 L26.2 156.3 L28.1 157.2 L30.0 160.0 L31.6 160.8 L33.1 161.8 L34.7 162.8 L36.2 162.4 L37.8 162.3 L39.4 161.3 L40.9 162.6 L42.5 163.1 L44.1 164.7 L45.6 164.7 L47.2 164.2 L48.8 163.9 L50.3 163.7 L51.9 163.9 L53.4 165.5 L55.0 166.0 L56.6 165.0 L58.1 165.3 L59.7 164.4 L61.2 162.3 L62.8 161.2 L64.4 161.2 L65.9 162.3 L67.5 162.9 L69.1 163.5 L70.6 164.1 L72.2 165.1 L73.8 165.3 L75.3 164.8 L76.9 165.8 L78.4 167.2 L80.0 168.0 L81.9 169.9 L83.8 170.3 L85.6 169.5 L87.5 170.4 L89.4 171.2 L91.2 171.3 L93.1 170.3 L95.0 170.2 L96.9 170.3 L98.8 169.4 L100.6 171.5 L102.5 171.5 L104.4 170.7 L106.2 171.8 L108.1 173.6 L110.0 176.0" fill="none" stroke="#8fa8c4" stroke-width="1" opacity="0.35" filter="url(#f05)"/>
<path d="M20.0 176.0 L21.9 175.9 L23.8 176.2 L25.6 173.5 L27.5 173.0 L29.4 174.9 L31.2 176.3 L33.1 176.5 L35.0 177.0 L36.9 176.7 L38.8 177.4 L40.6 175.2 L42.5 174.8 L44.4 176.0 L46.2 176.9 L48.1 176.7 L50.0 178.0 L51.9 179.1 L53.8 178.9 L55.6 179.8 L57.5 181.8 L59.4 184.8 L61.2 185.6 L63.1 185.7 L65.0 187.3 L66.9 187.4 L68.8 188.0 L70.6 188.1 L72.5 187.1 L74.4 186.8 L76.2 186.5 L78.1 184.1 L80.0 182.0 L81.2 183.2 L82.5 183.3 L83.8 184.3 L85.0 186.9 L86.2 187.1 L87.5 186.4 L88.8 187.4 L90.0 188.3 L91.2 187.6 L92.5 187.5 L93.8 187.3 L95.0 187.4 L96.2 186.5 L97.5 186.1 L98.8 186.2 L100.0 186.0" fill="none" stroke="#8fa8c4" stroke-width="1" opacity="0.35" filter="url(#f05)"/>
<rect x="0" y="30" width="248" height="156" fill="#fff" opacity="0.22" filter="url(#tex)"/>
<rect x="0" y="30" width="248" height="156" fill="#000" opacity="0.3" filter="url(#texd)"/>
</symbol><filter id="bb" x="-50%" y="-50%" width="200%" height="200%"><feGaussianBlur stdDeviation="1.3"/></filter>
<linearGradient id="bkg" x1="0" y1="0" x2="1" y2="0"><stop offset="0" stop-color="#06070c"/><stop offset="0.5" stop-color="#121218"/><stop offset="0.75" stop-color="#1d1a2c"/><stop offset="1" stop-color="#0a0e38"/></linearGradient>
<symbol id="bokeh" viewBox="0 0 248 186" preserveAspectRatio="none">
<rect width="248" height="186" fill="url(#bkg)"/>
<g filter="url(#bb)">
<circle cx="25" cy="12" r="3.5" fill="#90a8e8"/><circle cx="31" cy="9" r="3" fill="#b8c8f8"/><circle cx="40" cy="13" r="3" fill="#7890d0"/>
<circle cx="48" cy="9" r="4" fill="#d8e0ff"/><circle cx="54" cy="14" r="3" fill="#a0b0e0"/>
<circle cx="68" cy="3" r="2.5" fill="#e070c0"/><circle cx="72" cy="12" r="4" fill="#8cc070"/><circle cx="80" cy="5" r="3" fill="#f0a0d8"/>
<circle cx="90" cy="12" r="4" fill="#d0b070"/><circle cx="100" cy="6" r="6" fill="#f8f8f0"/><circle cx="108" cy="12" r="3.5" fill="#70b050"/>
<circle cx="118" cy="4" r="3" fill="#c0e0a0"/><circle cx="126" cy="12" r="3" fill="#a0c070"/>
<circle cx="136" cy="4" r="3.5" fill="#98d868"/><circle cx="146" cy="12" r="3" fill="#d0e8b0"/><circle cx="156" cy="3" r="2.5" fill="#e050c0"/>
<path d="M160 16 L200 0" stroke="#3a2e60" stroke-width="5" opacity=".7"/>
<path d="M190 16 L215 2" stroke="#302858" stroke-width="4" opacity=".6"/>
<circle cx="232" cy="12" r="7" fill="#2d50e8"/><circle cx="235" cy="13" r="3.5" fill="#a0c8ff"/>
</g>
</symbol>
</defs></svg>
<div class="abs" style="left:0;top:0;width:998px;height:22px;background:linear-gradient(#e9e7e9,#d6d4d6);"><div class="abs" style="left:8px;top:5px;width:12px;height:12px;border-radius:50%;background:#fc5f57;box-shadow:inset 0 0 0 0.9px #d2433c"></div><div class="abs" style="left:28px;top:5px;width:12px;height:12px;border-radius:50%;background:#fdbc2e;box-shadow:inset 0 0 0 0.9px #d69a22"></div><div class="abs" style="left:48px;top:5px;width:12px;height:12px;border-radius:50%;background:#29c840;box-shadow:inset 0 0 0 0.9px #17a02a"></div><div style="position:absolute;top:6.00px;font-size:12.8px;line-height:12.8px;font-weight:400;color:#4b4b4b;white-space:pre;letter-spacing:0.35px;left:350.0px;width:300px;text-align:center;">Photos Duplicate Cleaner</div>
</div><div class="abs" style="left:0;top:22px;width:998px;height:50px;background:linear-gradient(#565857,#434544 50%,#323433);border-top:1px solid #0a0a0a;border-bottom:1px solid #1b1c1c"></div><div class="abs" style="left:87px;top:23px;width:1px;height:48px;background:#0d0d0d"></div><div class="abs" style="left:88px;top:23px;width:1px;height:48px;background:#6a6b6b"></div><div class="abs" style="left:197px;top:23px;width:1px;height:48px;background:#0d0d0d"></div><div class="abs" style="left:198px;top:23px;width:1px;height:48px;background:#6a6b6b"></div><div class="abs" style="left:292px;top:23px;width:1px;height:48px;background:#0d0d0d"></div><div class="abs" style="left:293px;top:23px;width:1px;height:48px;background:#6a6b6b"></div><div class="abs" style="left:353px;top:23px;width:1px;height:48px;background:#0d0d0d"></div><div class="abs" style="left:354px;top:23px;width:1px;height:48px;background:#6a6b6b"></div><div class="abs" style="left:667px;top:23px;width:1px;height:48px;background:#0d0d0d"></div><div class="abs" style="left:668px;top:23px;width:1px;height:48px;background:#6a6b6b"></div><svg class="img" style="left:9px;top:33px" width="66" height="28" viewBox="0 0 66 28">
<defs><linearGradient id="bk" x1="0" y1="0" x2="0" y2="1"><stop offset="0" stop-color="#4a4a4a"/><stop offset="1" stop-color="#2d2d2d"/></linearGradient></defs>
<path d="M14.5 2.5 H62 a2 2 0 0 1 2 2 V24 a2 2 0 0 1 -2 2 H14.5 L1.5 14.3 Z" fill="none" stroke="#5a5a5a" stroke-width="1" opacity=".55"/>
<path d="M14.5 1.5 H62 a2 2 0 0 1 2 2 V23 a2 2 0 0 1 -2 2 H14.5 L1.5 13.3 Z" fill="url(#bk)" stroke="#1c1c1c" stroke-width="1"/>
<path d="M15 2.5 H62" stroke="#626262" stroke-width="1" opacity=".8"/>
</svg><div style="position:absolute;top:41.00px;font-size:11.4px;line-height:11.4px;font-weight:400;color:#f2f2f2;white-space:pre;letter-spacing:0.05px;left:24.9px;">zurück</div>
<svg class="img" style="left:130px;top:27px" width="26" height="24" viewBox="0 0 26 24">
<path d="M6.3 6.2 L20 18.6" stroke="#d6d6d6" stroke-width="4.4" stroke-linecap="round"/>
<path d="M6.6 6.4 L8.4 8.1" stroke="#3a3a3a" stroke-width="2" stroke-linecap="round"/>
<path d="M17.81 2.39 L18.34 5.00 L20.88 5.79 L18.56 7.10 L18.59 9.76 L16.63 7.96 L14.10 8.81 L15.21 6.39 L13.62 4.25 L16.27 4.56 Z" fill="#d8d8d8" stroke="#d8d8d8" stroke-width="0.6" stroke-linejoin="round"/>
</svg><div style="position:absolute;top:54.00px;font-size:10.2px;line-height:10.2px;font-weight:400;color:#ededed;white-space:pre;letter-spacing:0.45px;left:103px;">Auto Markierung</div>
<svg class="img" style="left:220px;top:30px" width="52" height="18" viewBox="0 0 52 18">
<path d="M13.2 2.6 H2.6 V15.4 H15.5 V11.6" fill="none" stroke="#d0d0d0" stroke-width="1.2"/>
<path d="M6.3 7.9 L10.2 11.7 L17.8 3.9" fill="none" stroke="#d4d4d4" stroke-width="3.8"/>
<path d="M20.5 9.5 H29.3 M26.1 6.3 L29.3 9.5 L26.1 12.7" fill="none" stroke="#d0d0d0" stroke-width="1.2"/>
<rect x="35.6" y="2.6" width="13.3" height="12.8" fill="none" stroke="#d0d0d0" stroke-width="1.2"/>
</svg><div style="position:absolute;top:54.00px;font-size:10.2px;line-height:10.2px;font-weight:400;color:#ededed;white-space:pre;letter-spacing:0.5px;left:210.5px;">Unmarkierung</div>
<svg class="img" style="left:302px;top:32px" width="42" height="33" viewBox="0 0 42 33">
<rect x="1.6" y="1.6" width="39" height="30.2" rx="2.5" fill="rgba(0,0,0,0.12)" stroke="#bdbdbd" stroke-width="1.2"/>
<path d="M7 8.7 H23.8 M7 16.4 H23.8 M7 24.4 H23.8" stroke="#d2d2d2" stroke-width="2.8"/>
<path d="M28.4 7.6 L31 10.2 L35 5.6 M28.4 15.6 L31 18.2 L35 13.6 M28.4 23.6 L31 26.2 L35 21.6" fill="none" stroke="#d2d2d2" stroke-width="2"/>
</svg><div style="position:absolute;top:34.00px;font-size:11.4px;line-height:11.4px;font-weight:400;color:#ececec;white-space:pre;letter-spacing:0.18px;right:340.79999999999995px;text-align:right;">1 of 99 in ausgewählten 41 Gruppen</div>
<div style="position:absolute;top:50.00px;font-size:11.4px;line-height:11.4px;font-weight:400;color:#ececec;white-space:pre;letter-spacing:0.18px;right:340.79999999999995px;text-align:right;">0 markiert</div>
<div class="abs" style="left:0;top:72px;width:656px;height:527px;background:#4a4a4a;overflow:hidden"><div class="abs" style="left:40px;top:-217px;width:258px;height:305px;background:#e5e8ea;"><div class="abs" style="left:0;top:260px;width:258px;height:45px;background:#718f4d;border-top:1px solid #1f2818;box-shadow:inset 0 1px 0 #89a66b"><div class="abs" style="left:5.6px;top:25.8px;width:13px;height:12.6px;background:#fff;border-radius:3px;box-shadow:0 0 1px rgba(0,0,0,.3)"></div><div style="position:absolute;top:6.00px;font-size:12.5px;line-height:12.5px;font-weight:700;color:#f6f6f6;white-space:pre;letter-spacing:0.42px;left:19.0px;width:239px;text-align:center;">image-347.jpg</div>
<div style="position:absolute;top:28.00px;font-size:12.1px;line-height:12.1px;font-weight:400;color:#f3f3f3;white-space:pre;letter-spacing:0.22px;left:19.0px;width:239px;text-align:center;">Sep. 23, 2025  1.68 MB</div>
</div></div><div class="abs" style="left:338px;top:-217px;width:258px;height:305px;background:#e5e8ea;"><div class="abs" style="left:0;top:260px;width:258px;height:45px;background:#718f4d;border-top:1px solid #1f2818;box-shadow:inset 0 1px 0 #89a66b"><div class="abs" style="left:5.6px;top:25.8px;width:13px;height:12.6px;background:#fff;border-radius:3px;box-shadow:0 0 1px rgba(0,0,0,.3)"></div><div style="position:absolute;top:6.00px;font-size:12.5px;line-height:12.5px;font-weight:700;color:#f6f6f6;white-space:pre;letter-spacing:0.42px;left:19.0px;width:239px;text-align:center;">image-36.jpg</div>
<div style="position:absolute;top:28.00px;font-size:12.1px;line-height:12.1px;font-weight:400;color:#f3f3f3;white-space:pre;letter-spacing:0.22px;left:19.0px;width:239px;text-align:center;">Sep. 23, 2025  1.68 MB</div>
</div></div><div class="abs" style="left:16px;top:102px;width:635px;height:28px;background:#888888;border-radius:3px;box-shadow:0 0 0 1px #3d3d3d;"><div style="position:absolute;top:8.00px;font-size:12.4px;line-height:12.4px;font-weight:700;color:#fbfbfb;white-space:pre;letter-spacing:0.05px;left:15.5px;">Duplikate Gruppe 18</div>
<div style="position:absolute;top:8.00px;font-size:12.4px;line-height:12.4px;font-weight:700;color:#fbfbfb;white-space:pre;right:5.5px;text-align:right;letter-spacing:0.05px;">2 Fotos</div>
</div><div class="abs" style="left:34px;top:140px;width:270px;height:314px;border:2px solid #97b8dc;border-radius:5px;background:#404040"></div><div class="abs" style="left:40px;top:145px;width:258px;height:305px;background:#e5e8ea;"><svg class="img" style="left:5px;top:6px" width="248" height="186"><use href="#mtn"/></svg><div class="abs" style="left:0;top:260px;width:258px;height:45px;background:#718f4d;border-top:1px solid #1f2818;box-shadow:inset 0 1px 0 #89a66b"><div class="abs" style="left:5.6px;top:25.8px;width:13px;height:12.6px;background:#fff;border-radius:3px;box-shadow:0 0 1px rgba(0,0,0,.3)"></div><div style="position:absolute;top:6.00px;font-size:12.5px;line-height:12.5px;font-weight:700;color:#f6f6f6;white-space:pre;letter-spacing:0.42px;left:19.0px;width:239px;text-align:center;">image-348.jpg</div>
<div style="position:absolute;top:28.00px;font-size:12.1px;line-height:12.1px;font-weight:400;color:#f3f3f3;white-space:pre;letter-spacing:0.22px;left:19.0px;width:239px;text-align:center;">Sep. 23, 2025  744.22 KB</div>
</div></div><div class="abs" style="left:338px;top:145px;width:258px;height:305px;background:#e5e8ea;"><svg class="img" style="left:5px;top:6px" width="248" height="186"><use href="#mtn"/></svg><div class="abs" style="left:0;top:260px;width:258px;height:45px;background:#718f4d;border-top:1px solid #1f2818;box-shadow:inset 0 1px 0 #89a66b"><div class="abs" style="left:5.6px;top:25.8px;width:13px;height:12.6px;background:#fff;border-radius:3px;box-shadow:0 0 1px rgba(0,0,0,.3)"></div><div style="position:absolute;top:6.00px;font-size:12.5px;line-height:12.5px;font-weight:700;color:#f6f6f6;white-space:pre;letter-spacing:0.42px;left:19.0px;width:239px;text-align:center;">image-37.jpg</div>
<div style="position:absolute;top:28.00px;font-size:12.1px;line-height:12.1px;font-weight:400;color:#f3f3f3;white-space:pre;letter-spacing:0.22px;left:19.0px;width:239px;text-align:center;">Sep. 23, 2025  744.22 KB</div>
</div></div><div class="abs" style="left:16px;top:464px;width:635px;height:28px;background:#888888;border-radius:3px;box-shadow:0 0 0 1px #3d3d3d;"><div style="position:absolute;top:8.00px;font-size:12.4px;line-height:12.4px;font-weight:700;color:#fbfbfb;white-space:pre;letter-spacing:0.05px;left:15.5px;">Duplikate Gruppe 19</div>
<div style="position:absolute;top:8.00px;font-size:12.4px;line-height:12.4px;font-weight:700;color:#fbfbfb;white-space:pre;right:5.5px;text-align:right;letter-spacing:0.05px;">2 Fotos</div>
</div><div class="abs" style="left:40px;top:507px;width:258px;height:305px;background:#e5e8ea;"><svg class="img" style="left:5px;top:6px" width="248" height="186"><use href="#bokeh"/></svg><div class="abs" style="left:0;top:260px;width:258px;height:45px;background:#718f4d;border-top:1px solid #1f2818;box-shadow:inset 0 1px 0 #89a66b"><div class="abs" style="left:5.6px;top:25.8px;width:13px;height:12.6px;background:#fff;border-radius:3px;box-shadow:0 0 1px rgba(0,0,0,.3)"></div><div style="position:absolute;top:6.00px;font-size:12.5px;line-height:12.5px;font-weight:700;color:#f6f6f6;white-space:pre;letter-spacing:0.42px;left:19.0px;width:239px;text-align:center;">image-349.jpg</div>
<div style="position:absolute;top:28.00px;font-size:12.1px;line-height:12.1px;font-weight:400;color:#f3f3f3;white-space:pre;letter-spacing:0.22px;left:19.0px;width:239px;text-align:center;"></div>
</div></div><div class="abs" style="left:338px;top:507px;width:258px;height:305px;background:#e5e8ea;"><svg class="img" style="left:5px;top:6px" width="248" height="186"><use href="#bokeh"/></svg><div class="abs" style="left:0;top:260px;width:258px;height:45px;background:#718f4d;border-top:1px solid #1f2818;box-shadow:inset 0 1px 0 #89a66b"><div class="abs" style="left:5.6px;top:25.8px;width:13px;height:12.6px;background:#fff;border-radius:3px;box-shadow:0 0 1px rgba(0,0,0,.3)"></div><div style="position:absolute;top:6.00px;font-size:12.5px;line-height:12.5px;font-weight:700;color:#f6f6f6;white-space:pre;letter-spacing:0.42px;left:19.0px;width:239px;text-align:center;">image-38.jpg</div>
<div style="position:absolute;top:28.00px;font-size:12.1px;line-height:12.1px;font-weight:400;color:#f3f3f3;white-space:pre;letter-spacing:0.22px;left:19.0px;width:239px;text-align:center;"></div>
</div></div><div class="abs" style="left:0;top:0;width:656px;height:2px;background:#4d5050"></div></div><div class="abs" style="left:656px;top:74px;width:11px;height:525px;background:#000"></div><div class="abs" style="left:657px;top:243px;width:9px;height:16px;background:#8d8d8d;border-radius:4.5px"></div><div class="abs" style="left:667px;top:72px;width:331px;height:559px;background:#2e2e2e"></div><div class="abs" style="left:996px;top:72px;width:1px;height:559px;background:#0a0a0a"></div><div class="abs" style="left:997px;top:72px;width:1px;height:559px;background:#5a5a5a"></div><div class="abs" style="left:682px;top:80px;width:305px;height:208px;background:#202020;border-radius:4px;box-shadow:0 0 0 1px #1a1a1a"></div><div style="position:absolute;top:86.00px;font-size:13.4px;line-height:13.4px;font-weight:400;color:#acacac;white-space:pre;letter-spacing:0.2px;left:697.4px;-webkit-text-stroke:0.45px #acacac;">Vorschau</div>
<svg class="img" style="left:713px;top:106px" width="236" height="177"><use href="#mtn"/></svg><div class="abs" style="left:682px;top:297px;width:305px;height:326px;background:#202020;border-radius:4px;box-shadow:0 0 0 1px #1a1a1a;overflow:hidden"><div style="position:absolute;top:7.00px;font-size:13.4px;line-height:13.4px;font-weight:400;color:#acacac;white-space:pre;letter-spacing:0.2px;left:15.6px;-webkit-text-stroke:0.45px #acacac;">Metadaten</div>
<div class="abs" style="left:0;top:0;width:305px;height:320px;overflow:hidden"><div style="position:absolute;top:31.00px;font-size:11.6px;line-height:11.6px;font-weight:400;color:#c9c9c9;white-space:pre;right:180.70000000000005px;text-align:right;">Dateiname</div>
<div style="position:absolute;top:31.00px;font-size:11.6px;line-height:11.6px;font-weight:400;color:#c9c9c9;white-space:pre;letter-spacing:0.1px;left:132.39999999999998px;">image-348.jpg</div>
<div style="position:absolute;top:50.00px;font-size:11.6px;line-height:11.6px;font-weight:400;color:#c9c9c9;white-space:pre;right:180.70000000000005px;text-align:right;">Dateigröße</div>
<div style="position:absolute;top:50.00px;font-size:11.6px;line-height:11.6px;font-weight:400;color:#c9c9c9;white-space:pre;letter-spacing:0.1px;left:132.39999999999998px;">744.22 KB</div>
<div style="position:absolute;top:69.00px;font-size:11.6px;line-height:11.6px;font-weight:400;color:#c9c9c9;white-space:pre;right:180.70000000000005px;text-align:right;">Dateikennsatz</div>
<div style="position:absolute;top:69.00px;font-size:11.6px;line-height:11.6px;font-weight:400;color:#c9c9c9;white-space:pre;letter-spacing:1.3px;left:132.39999999999998px;">---</div>
<div style="position:absolute;top:88.00px;font-size:11.6px;line-height:11.6px;font-weight:400;color:#c9c9c9;white-space:pre;right:180.70000000000005px;text-align:right;">Datei erstellt</div>
<div style="position:absolute;top:88.00px;font-size:11.6px;line-height:11.6px;font-weight:400;color:#c9c9c9;white-space:pre;letter-spacing:0.1px;left:132.39999999999998px;">Sep. 23, 2025 09:40:54 AM</div>
<div style="position:absolute;top:107.00px;font-size:11.6px;line-height:11.6px;font-weight:400;color:#c9c9c9;white-space:pre;right:180.70000000000005px;text-align:right;">Datei geändert</div>
<div style="position:absolute;top:107.00px;font-size:11.6px;line-height:11.6px;font-weight:400;color:#c9c9c9;white-space:pre;letter-spacing:0.1px;left:132.39999999999998px;">Mai 14, 2024 04:44:02 PM</div>
<div style="position:absolute;top:126.00px;font-size:11.6px;line-height:11.6px;font-weight:400;color:#c9c9c9;white-space:pre;right:180.70000000000005px;text-align:right;">Ordnername</div>
<div style="position:absolute;top:126.00px;font-size:11.6px;line-height:11.6px;font-weight:400;color:#c9c9c9;white-space:pre;letter-spacing:0.1px;left:132.39999999999998px;">Images 2</div>
<div style="position:absolute;top:145.00px;font-size:11.6px;line-height:11.6px;font-weight:400;color:#c9c9c9;white-space:pre;right:180.70000000000005px;text-align:right;">Bewertung</div>
<div style="position:absolute;top:145.00px;font-size:11.6px;line-height:11.6px;font-weight:400;color:#c9c9c9;white-space:pre;letter-spacing:1.3px;left:132.39999999999998px;">---</div>
<div style="position:absolute;top:164.00px;font-size:11.6px;line-height:11.6px;font-weight:400;color:#c9c9c9;white-space:pre;right:180.70000000000005px;text-align:right;">Schlüsselwörter</div>
<div style="position:absolute;top:164.00px;font-size:11.6px;line-height:11.6px;font-weight:400;color:#c9c9c9;white-space:pre;letter-spacing:1.3px;left:132.39999999999998px;">---</div>
<div style="position:absolute;top:183.00px;font-size:11.6px;line-height:11.6px;font-weight:400;color:#c9c9c9;white-space:pre;right:180.70000000000005px;text-align:right;">Bildgröße</div>
<div style="position:absolute;top:183.00px;font-size:11.6px;line-height:11.6px;font-weight:400;color:#c9c9c9;white-space:pre;letter-spacing:0.1px;left:132.39999999999998px;">4032 x 3024</div>
<div style="position:absolute;top:202.00px;font-size:11.6px;line-height:11.6px;font-weight:400;color:#c9c9c9;white-space:pre;right:180.70000000000005px;text-align:right;">Bildpunkte pro Zoll</div>
<div style="position:absolute;top:202.00px;font-size:11.6px;line-height:11.6px;font-weight:400;color:#c9c9c9;white-space:pre;letter-spacing:0.1px;left:132.39999999999998px;">72.0 x 72.0</div>
<div style="position:absolute;top:221.00px;font-size:11.6px;line-height:11.6px;font-weight:400;color:#c9c9c9;white-space:pre;right:180.70000000000005px;text-align:right;">Orientierung</div>
<div style="position:absolute;top:221.00px;font-size:11.6px;line-height:11.6px;font-weight:400;color:#c9c9c9;white-space:pre;letter-spacing:0.1px;left:132.39999999999998px;">1 (Normal)</div>
<div style="position:absolute;top:240.00px;font-size:11.6px;line-height:11.6px;font-weight:400;color:#c9c9c9;white-space:pre;right:180.70000000000005px;text-align:right;">Digital Brennweiten...</div>
<div style="position:absolute;top:240.00px;font-size:11.6px;line-height:11.6px;font-weight:400;color:#c9c9c9;white-space:pre;letter-spacing:1.3px;left:132.39999999999998px;">---</div>
<div style="position:absolute;top:259.00px;font-size:11.6px;line-height:11.6px;font-weight:400;color:#c9c9c9;white-space:pre;right:180.70000000000005px;text-align:right;">Erfassung von Datu...</div>
<div style="position:absolute;top:259.00px;font-size:11.6px;line-height:11.6px;font-weight:400;color:#c9c9c9;white-space:pre;letter-spacing:1.3px;left:132.39999999999998px;">---</div>
<div style="position:absolute;top:278.00px;font-size:11.6px;line-height:11.6px;font-weight:400;color:#c9c9c9;white-space:pre;right:180.70000000000005px;text-align:right;">Bearbeitungs Softw...</div>
<div style="position:absolute;top:278.00px;font-size:11.6px;line-height:11.6px;font-weight:400;color:#c9c9c9;white-space:pre;letter-spacing:1.3px;left:132.39999999999998px;">---</div>
<div style="position:absolute;top:297.00px;font-size:11.6px;line-height:11.6px;font-weight:400;color:#c9c9c9;white-space:pre;right:180.70000000000005px;text-align:right;">Belichtung</div>
<div style="position:absolute;top:297.00px;font-size:11.6px;line-height:11.6px;font-weight:400;color:#c9c9c9;white-space:pre;letter-spacing:1.3px;left:132.39999999999998px;">---</div>
<div style="position:absolute;top:316.00px;font-size:11.6px;line-height:11.6px;font-weight:400;color:#c9c9c9;white-space:pre;right:180.70000000000005px;text-align:right;">Brennweite</div>
<div style="position:absolute;top:316.00px;font-size:11.6px;line-height:11.6px;font-weight:400;color:#c9c9c9;white-space:pre;letter-spacing:1.3px;left:132.39999999999998px;">---</div>
</div><div class="abs" style="left:284px;top:31px;width:9px;height:127px;background:#7f7f7f;border-radius:4.5px"></div></div><div class="abs" style="left:0;top:599px;width:667px;height:32px;background:linear-gradient(#545454,#474747);border-top:1px solid #0d0d0d"></div><svg class="img" style="left:9px;top:608px" width="17" height="15" viewBox="0 0 17 15">
<path d="M0.5 2 a1 1 0 0 1 1-1 H6 L7.5 2.6 H15.5 a1 1 0 0 1 1 1 V13.5 a1 1 0 0 1 -1 1 H1.5 a1 1 0 0 1 -1-1 Z" fill="#5fb7ee"/>
<path d="M0.5 4 H16.5 V13.5 a1 1 0 0 1 -1 1 H1.5 a1 1 0 0 1 -1-1 Z" fill="#74c6f6"/>
</svg><div style="position:absolute;top:610.00px;font-size:12.4px;line-height:12.4px;font-weight:400;color:#f4f4f4;white-space:pre;letter-spacing:0.2px;left:28.9px;">Volumes</div>
<svg class="img" style="left:83px;top:612px" width="6" height="8" viewBox="0 0 6 8"><path d="M1.2 1 L4.4 4 L1.2 7" fill="none" stroke="#141414" stroke-width="1.6"/></svg><svg class="img" style="left:96px;top:608px" width="15" height="16" viewBox="0 0 15 16">
<defs><linearGradient id="drv" x1="0" y1="0" x2="0" y2="1"><stop offset="0" stop-color="#f4f4f4"/><stop offset="1" stop-color="#c9c9c9"/></linearGradient></defs>
<path d="M2 1 H13 L14.5 11 V14 a1 1 0 0 1 -1 1 H1.5 a1 1 0 0 1 -1-1 V11 Z" fill="url(#drv)"/>
<path d="M0.5 11 H14.5" stroke="#9a9a9a" stroke-width="0.8"/>
<path d="M3 13 H12" stroke="#8a8a8a" stroke-width="0.8"/>
</svg><div style="position:absolute;top:610.00px;font-size:12.4px;line-height:12.4px;font-weight:400;color:#f4f4f4;white-space:pre;left:115.2px;">UPAN</div>
<svg class="img" style="left:153px;top:612px" width="6" height="8" viewBox="0 0 6 8"><path d="M1.2 1 L4.4 4 L1.2 7" fill="none" stroke="#141414" stroke-width="1.6"/></svg><svg class="img" style="left:165px;top:608px" width="17" height="15" viewBox="0 0 17 15">
<path d="M0.5 2 a1 1 0 0 1 1-1 H6 L7.5 2.6 H15.5 a1 1 0 0 1 1 1 V13.5 a1 1 0 0 1 -1 1 H1.5 a1 1 0 0 1 -1-1 Z" fill="#5fb7ee"/>
<path d="M0.5 4 H16.5 V13.5 a1 1 0 0 1 -1 1 H1.5 a1 1 0 0 1 -1-1 Z" fill="#74c6f6"/>
</svg><div style="position:absolute;top:610.00px;font-size:12.4px;line-height:12.4px;font-weight:400;color:#f4f4f4;white-space:pre;left:185.4px;">Images 2</div>
<svg class="img" style="left:242px;top:612px" width="6" height="8" viewBox="0 0 6 8"><path d="M1.2 1 L4.4 4 L1.2 7" fill="none" stroke="#141414" stroke-width="1.6"/></svg><svg class="img" style="left:256px;top:607px" width="12" height="16" viewBox="0 0 12 16">
<path d="M0.5 0.5 H7.5 L11.5 4.5 V15.5 H0.5 Z" fill="#f5f5f5" stroke="#9a9a9a" stroke-width="0.8"/>
<path d="M7.5 0.5 V4.5 H11.5" fill="#ddd" stroke="#9a9a9a" stroke-width="0.8"/>
<rect x="2.5" y="8" width="7" height="5" rx="1" fill="#6d7fa6"/>
</svg><div style="position:absolute;top:610.00px;font-size:12.8px;line-height:12.8px;font-weight:400;color:#f4f4f4;white-space:pre;letter-spacing:0.3px;left:274px;">image-348.jpg</div>
<div class="abs" style="left:0;top:631px;width:998px;height:45px;background:linear-gradient(#d3d3d3,#c4c4c4 40%,#b1b1b1);border-top:1px solid #161616"></div><div class="abs" style="left:0;top:632px;width:998px;height:1px;background:#ececec"></div><div class="abs" style="left:405px;top:640px;width:190px;height:33px;border-radius:4px;background:linear-gradient(#a4a4a4,#8e8e8e 60%,#7f7f7f);box-shadow:inset 0 0 0 1px #6e6e6e,inset 0 2px 0 0 #b4b4b4"></div><svg class="img" style="left:416px;top:645px" width="20" height="25" viewBox="0 0 20 25">
<rect x="5.3" y="1" width="9.8" height="3.2" fill="#fff"/>
<rect x="7.6" y="2.4" width="5.2" height="1.6" fill="#8f8f8f"/>
<rect x="0.5" y="4" width="18.3" height="2.7" fill="#fff"/>
<path d="M1.6 7 H18 L17.6 23.4 H2 Z" fill="#fff"/>
<path d="M6 10 V19.7 M10.2 10 V19.7 M14.2 10 V19.7" stroke="#7e7e7e" stroke-width="1.7"/>
</svg><div style="position:absolute;top:650.00px;font-size:15.4px;line-height:15.4px;font-weight:400;color:#f4f4f4;white-space:pre;letter-spacing:0.12px;left:445px;">Markiert Papierkorb</div>
</body></html>
